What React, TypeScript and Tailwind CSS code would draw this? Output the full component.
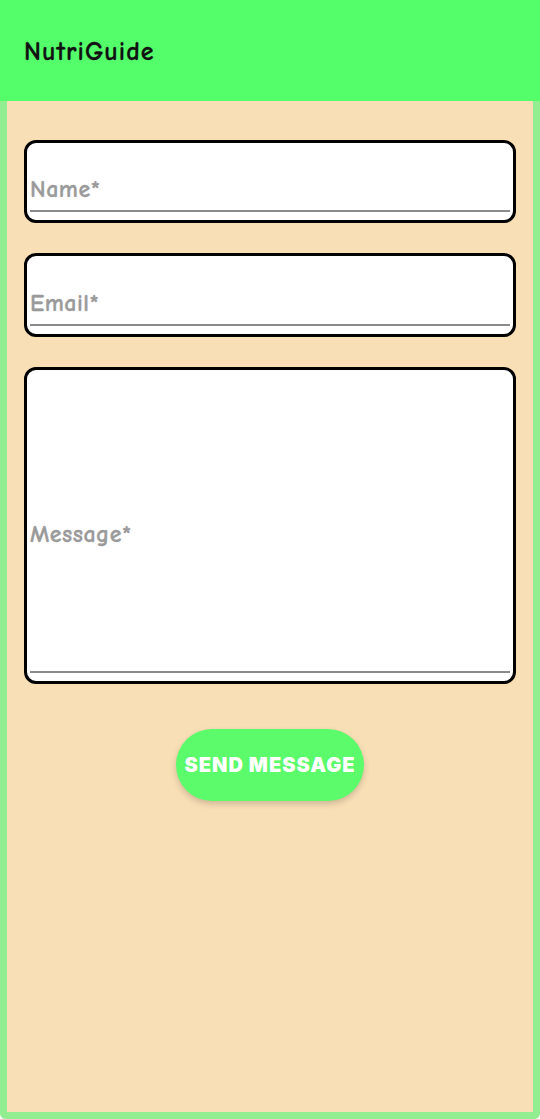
import React from 'react';

const comic = { fontFamily: '"Comic Sans MS", "Comic Neue", "DejaVu Sans", sans-serif' };

function Field({ label, height, gap }: { label: string; height: string; gap: string }) {
  return (
    <div className={`${height} bg-white border-[3px] border-black rounded-[12px] flex flex-col justify-end px-[3px] pb-[8px]`}>
      <div className="text-[24px] leading-[24px] tracking-[0.02em] text-[#9a9a9a] font-bold [-webkit-text-stroke:0.3px_#9a9a9a]" style={comic}>
        {label}
      </div>
      <div className={`${gap} h-[2px] bg-[#8a8a8a]`}></div>
    </div>
  );
}

function App() {
  return (
    <div className="h-[1119px] w-full flex flex-col bg-white">
      <header className="h-[101px] shrink-0 bg-[#53fe6a] flex items-center px-6">
        <h1 className="text-[26px] font-bold tracking-[0.04em] text-[#111] pt-[4px] [-webkit-text-stroke:0.3px_#111]" style={comic}>
          NutriGuide
        </h1>
      </header>

      <main className="flex-1 bg-[#f9dfb6] border-x-[7px] border-b-[7px] border-[#92ee90] rounded-b-[6px] px-[17px] pt-[39px]">
        <div className="flex flex-col gap-[30px]">
          <Field label="Name*" height="h-[83px]" gap="mt-[9px]" />
          <Field label="Email*" height="h-[84px]" gap="mt-[9px]" />
          <Field label="Message*" height="h-[317px]" gap="mt-[125px]" />
        </div>

        <div className="flex justify-center mt-[45px]">
          <button className="w-[188px] h-[72px] rounded-full bg-[#5bfb6b] text-white text-[20px] font-black tracking-[0.05em] shadow-[0_3px_6px_rgba(0,0,0,0.18)]" style={{ fontFamily: 'Inter, "Noto Sans", sans-serif' }}>
            SEND MESSAGE
          </button>
        </div>
      </main>
    </div>
  );
}

export default App;
